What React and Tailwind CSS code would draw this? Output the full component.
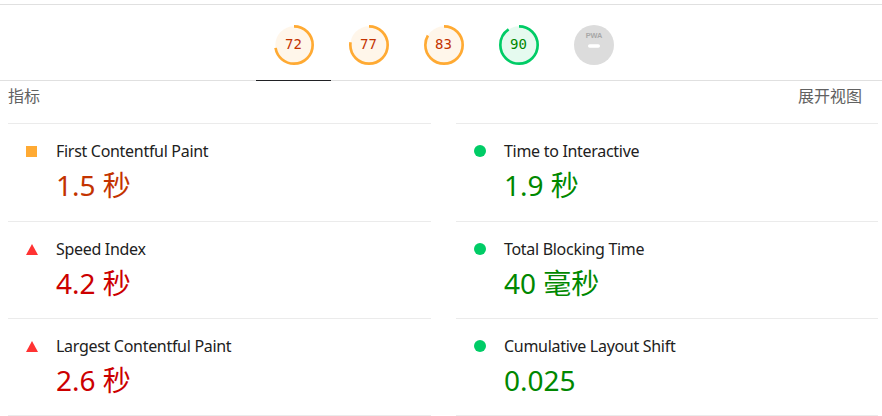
import React from "react";

const FONT = { fontFamily: '"Noto Sans", "Noto Sans CJK SC", sans-serif' };
const MONO = { fontFamily: '"DejaVu Sans Mono", monospace' };

const gauges = [
  { score: 72, rating: "average" },
  { score: 77, rating: "average" },
  { score: 83, rating: "average" },
  { score: 90, rating: "pass" },
];

const metrics = [
  { title: "First Contentful Paint", value: "1.5 秒", rating: "average" },
  { title: "Time to Interactive", value: "1.9 秒", rating: "pass" },
  { title: "Speed Index", value: "4.2 秒", rating: "fail" },
  { title: "Total Blocking Time", value: "40 毫秒", rating: "pass" },
  { title: "Largest Contentful Paint", value: "2.6 秒", rating: "fail" },
  { title: "Cumulative Layout Shift", value: "0.025", rating: "pass" },
];

const valueColor = {
  average: "text-[#c33300]",
  fail: "text-[#cc0000]",
  pass: "text-[#008800]",
};

function Gauge({ score, rating }) {
  const r = 56;
  const c = 2 * Math.PI * r;
  const stroke = rating === "pass" ? "#00cc66" : "#ffaa33";
  const fill = rating === "pass" ? "rgba(0,204,102,0.1)" : "rgba(255,170,51,0.1)";
  return (
    <div className="relative w-[40px] h-[40px]">
      <svg viewBox="0 0 120 120" className="w-full h-full">
        <circle cx="60" cy="60" r={r} fill={fill} stroke="none" />
        <circle
          cx="60"
          cy="60"
          r={r}
          fill="none"
          stroke={stroke}
          strokeWidth="8"
          strokeDasharray={`${(score / 100) * c} ${c}`}
          transform="rotate(-90 60 60)"
        />
      </svg>
      <div
        style={MONO}
        className={`absolute inset-0 flex items-center justify-center text-[14px] ${rating === "pass" ? "text-[#008800]" : "text-[#c33300]"}`}
      >
        {score}
      </div>
    </div>
  );
}

function PwaGauge() {
  return (
    <svg viewBox="0 0 60 60" className="w-[40px] h-[40px]">
      <circle cx="30" cy="30" r="30" fill="#dcdcdc" />
      <text x="30" y="20" textAnchor="middle" fontSize="11" fill="#a8a8a8" fontFamily="Liberation Sans, sans-serif" fontWeight="bold">
        PWA
      </text>
      <rect x="21" y="29" width="18" height="5" rx="2.5" fill="#ffffff" />
    </svg>
  );
}

function MetricIcon({ rating }) {
  if (rating === "average") return <div className="w-[11px] h-[11px] bg-[#ffaa33]" />;
  if (rating === "fail")
    return (
      <svg width="12" height="11" viewBox="0 0 12 11">
        <polygon points="6,0 12,11 0,11" fill="#ff3333" />
      </svg>
    );
  return <div className="w-[12px] h-[12px] rounded-full bg-[#00cc66]" />;
}

function Metric({ title, value, rating, first, last }) {
  return (
    <div className={`border-t border-[#ebebeb] pt-[15px] ${first ? "pb-[18px]" : "pb-[17px]"} ${last ? "border-b" : ""}`}>
      <div className="flex items-center h-[24px]">
        <div className="w-[48px] pl-[18px] flex items-center">
          <MetricIcon rating={rating} />
        </div>
        <span className="text-[16px] leading-[24px] tracking-[-0.3px] text-[#212121]">{title}</span>
      </div>
      <div className={`mt-[4px] pl-[48px] text-[28px] leading-[36px] ${valueColor[rating]}`}>{value}</div>
    </div>
  );
}

export default function App() {
  return (
    <div style={FONT} className="w-[882px] h-[416px] bg-white overflow-hidden pt-[4px]">
      <div className="flex justify-center pl-[5px] border-t border-b border-[#e0e0e0]">
        {gauges.map((g, i) => (
          <div
            key={g.score}
            className={`w-[75px] h-[76px] pt-[4px] -mb-px flex items-center justify-center border-b ${i === 0 ? "border-[#202124]" : "border-transparent"}`}
          >
            <Gauge score={g.score} rating={g.rating} />
          </div>
        ))}
        <div className="w-[75px] h-[76px] pt-[4px] -mb-px flex items-center justify-center border-b border-transparent">
          <PwaGauge />
        </div>
      </div>

      <div className="flex justify-between pl-[8px] pr-[20px] pt-[5px] h-[42px] text-[16px] leading-[20px] text-[#616161]">
        <span>指标</span>
        <span>展开视图</span>
      </div>

      <div className="grid grid-cols-[423px_422px] gap-x-[25px] pl-[8px]">
        {metrics.map((m, i) => (
          <Metric key={m.title} {...m} first={i < 2} last={i >= 4} />
        ))}
      </div>
    </div>
  );
}
